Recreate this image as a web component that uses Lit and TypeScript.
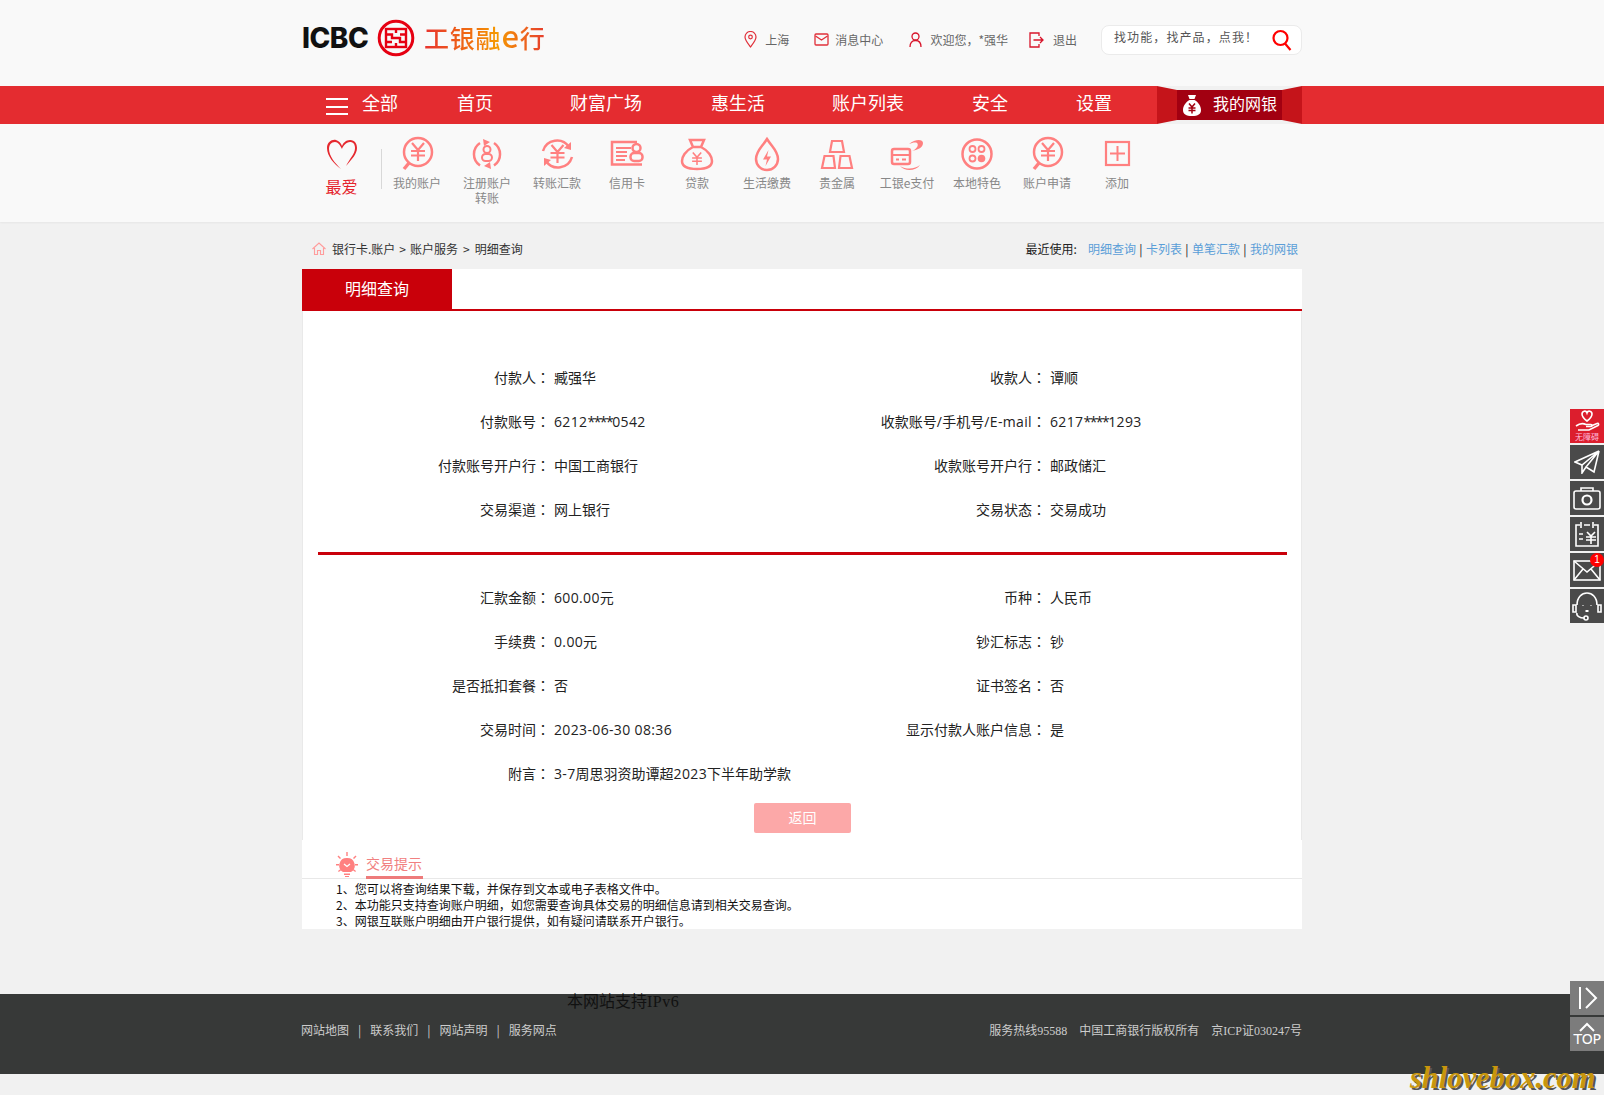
import { LitElement, html, css, svg } from "lit";
import { customElement } from "lit/decorators.js";

const yen = (x: number, y: number, s = 1) => svg`<path transform="translate(${x} ${y}) scale(${s})" d="M-6 -8L0 -1L6 -8M-7 0H7M-7 4.5H7M0 -1V10" fill="none" stroke="currentColor" stroke-width="2.2"/>`;

const icons: Record<string, unknown> = {
  account: svg`<circle cx="19" cy="16" r="14"/><path d="M10 27L5 33" stroke-width="3.4"/>${yen(19, 15)}`,
  register: svg`<path d="M11 7A13.500 13.500 0 0 0 11 29.500M25 7A13.500 13.500 0 0 1 25 29.500"/><path d="M14 3L21 6L15 10Z" fill="currentColor" stroke="none"/><path d="M22 33L15 30L21 26Z" fill="currentColor" stroke="none"/><circle cx="18" cy="13.500" r="3.500" stroke-width="2"/><rect x="13" y="18" width="10" height="7" rx="3.500" stroke-width="2"/>`,
  transfer: svg`<path d="M4 15A14.500 14.500 0 0 1 30 11"/><path d="M33 21A14.500 14.500 0 0 1 7 25"/><path d="M32 6V14L25 12Z" fill="currentColor" stroke="none"/><path d="M5 30V22L12 24Z" fill="currentColor" stroke="none"/>${yen(18.5, 17)}`,
  card: svg`<path d="M28 6H3V28.500H33"/><path d="M7 12H22M7 16H18M7 20H18M7 24H16" stroke-width="2"/><circle cx="27.500" cy="12" r="4"/><rect x="21.500" y="17" width="12" height="8" rx="3.500"/>`,
  loan: svg`<path d="M11 4H25L22 11H14ZM14 11C6 15 3 21 3 25C3 31 8 33 18 33C28 33 33 31 33 25C33 21 30 15 22 11"/>${yen(18, 22, .7)}`,
  life: svg`<path d="M18 3C13 11 7 15 7 23A11 11 0 0 0 29 23C29 15 23 11 18 3Z"/><path d="M19.500 14L14 23.500H18L16.500 30L22 20.500H18Z" fill="currentColor" stroke="none"/>`,
  gold: svg`<path d="M13 5H23L25 16H11ZM5.500 20H14.500L16 32H3ZM21.500 20H30.500L33 32H20Z" stroke-width="2.200"/>`,
  epay: svg`<rect x="3" y="13" width="18" height="15" rx="2"/><path d="M3 19H21M7 23.500H10M13 23.500H17" stroke-width="2"/><path d="M20 8C26 3 34 3 34 7C34 12 28 14 23 15C28 13 30 9 28 7C26 6 23 7 20 8Z" fill="currentColor" stroke="none"/><path d="M11 30C18 34 26 33 31 29C27 35 16 36 11 30Z" fill="currentColor" stroke="none"/>`,
  local: svg`<circle cx="18" cy="18" r="14.500"/><circle cx="13.500" cy="13" r="3" stroke-width="1.800"/><circle cx="22.500" cy="13" r="3" stroke-width="1.800"/><circle cx="13.500" cy="22.500" r="3" stroke-width="1.800"/><circle cx="22.500" cy="22.500" r="3.800" fill="currentColor" stroke="none"/>`,
  add: svg`<rect x="7" y="6" width="23" height="23" stroke-width="2.200"/><path d="M18.500 10V25M11 17.500H26" stroke-width="2"/>`,
};

const shortcuts: [string, string, string?][] = [
  ["account", "我的账户"], ["register", "注册账户", "转账"], ["transfer", "转账汇款"], ["card", "信用卡"],
  ["loan", "贷款"], ["life", "生活缴费"], ["gold", "贵金属"], ["epay", "工银e支付"], ["local", "本地特色"],
  ["account", "账户申请"], ["add", "添加"],
];

const first: [string, string, string, string][] = [
  ["付款人", "臧强华", "收款人", "谭顺"],
  ["付款账号", "6212****0542", "收款账号/手机号/E-mail", "6217****1293"],
  ["付款账号开户行", "中国工商银行", "收款账号开户行", "邮政储汇"],
  ["交易渠道", "网上银行", "交易状态", "交易成功"],
];
const second: [string, string, string, string][] = [
  ["汇款金额", "600.00元", "币种", "人民币"],
  ["手续费", "0.00元", "钞汇标志", "钞"],
  ["是否抵扣套餐", "否", "证书签名", "否"],
  ["交易时间", "2023-06-30 08:36", "显示付款人账户信息", "是"],
];

const latin = (t: string) => t.split(/(\*+)/).map((p, i) => (i % 2 ? html`<span class="ast">${p}</span>` : p));
const runs = (t: string) => t.split(/([\x20-\x7e]+)/).map((p, i) => (i % 2 ? html`<span class="ln">${latin(p)}</span>` : p));

@customElement("app-root")
export class AppRoot extends LitElement {
  static styles = css`
    :host { display: block; position: relative; min-height: 1095px; overflow: hidden; background: #f1f1f1; color: #222; font: 12px "Noto Sans CJK SC", "Liberation Sans", sans-serif; }
    * { box-sizing: border-box; }
    a { color: inherit; text-decoration: none; }
    svg { display: block; flex: none; }
    .wrap { width: 1000px; margin: 0 auto; }
    .top { background: #f9f9f9; height: 86px; }
    .top .wrap { display: flex; align-items: center; height: 79px; }
    .logo { display: flex; align-items: center; margin-top: -3px; }
    .icbc { font: 800 28px/1 Inter, "Liberation Sans", sans-serif; color: #111; letter-spacing: -.5px; width: 76px; }
    .brand { margin-left: 9px; margin-top: -2px; font-size: 25px; line-height: 32px; letter-spacing: .8px; font-weight: 500; white-space: nowrap; background: linear-gradient(90deg, #e8332f 0%, #f0700f 40%, #f59a00 60%, #ee6a1a 80%, #e63a2e 100%); -webkit-background-clip: text; background-clip: text; color: transparent; }
    .brand span { font-size: 31px; line-height: 20px; font-weight: 500; }
    .links { margin-left: auto; display: flex; align-items: center; gap: 24px; color: #666; white-space: nowrap; }
    .links .i { display: flex; align-items: center; gap: 8px; }
    .links .mail { margin-left: 1px; gap: 6px; }
    .links .user { margin-left: 2px; }
    .links .exit { margin-left: -3px; gap: 9px; }
    .search { width: 201px; height: 30px; background: #fff; border: 1px solid #ebebeb; border-radius: 8px; display: flex; justify-content: space-between; padding: 2px 9px 0 12px; color: #555; letter-spacing: 1.1px; line-height: 18px; }
    .nav { background: #e42c30; height: 38px; color: #fff; }
    .nav .wrap { display: flex; align-items: center; height: 38px; font-size: 18px; line-height: 32px; white-space: nowrap; }
    .nav .wrap > * { flex: none; }
    .nav .wrap > a, .nav .wrap > span { padding-bottom: 6px; }
    .burger { margin-left: 24px; width: 22px; height: 17px; margin-right: 14px; margin-top: 3px; border-top: 2px solid #fff; border-bottom: 2px solid #fff; position: relative; }
    .burger::after { content: ""; position: absolute; left: 0; right: 0; top: 5.5px; height: 2px; background: #fff; }
    .n1 { margin-left: 59px; } .n2 { margin-left: 77px; } .n3 { margin-left: 69px; } .n4 { margin-left: 67px; } .n5 { margin-left: 68px; } .n6 { margin-left: 68px; }
    .ribbon { margin-left: 45px; width: 145px; height: 38px; position: relative; background: #f1f1f1; display: flex; justify-content: center; align-items: center; }
    .ribbon .wing { position: absolute; left: 0; top: 0; }
    .ribbon .mid { position: relative; width: 105px; height: 30px; background: #a20011; display: flex; align-items: center; padding-left: 6px; gap: 12px; font-size: 16px; line-height: 24px; }
    .ribbon .mid span { padding-bottom: 5px; }
    .shortcuts { background: #f9f9f9; height: 98px; box-shadow: 0 1px 2px rgba(0,0,0,.05); }
    .shortcuts .wrap { display: flex; }
    .fav { width: 79px; padding-top: 15px; display: flex; flex-direction: column; align-items: center; color: #e5252d; font-size: 16px; line-height: 24px; }
    .fav svg { margin-bottom: 4px; }
    .sep { width: 1px; height: 40px; background: #d8d8d8; margin-top: 25px; }
    .sc { width: 70px; padding-top: 12px; display: flex; flex-direction: column; align-items: center; color: #888; line-height: 14.500px; text-align: center; }
    .sc svg { color: #ff8080; margin-bottom: 4px; fill: none; stroke: currentColor; stroke-width: 2.500; }
    .crumb { height: 47px; padding: 5px 4px 0 10px; display: flex; align-items: center; color: #333; }
    .crumb .home { margin-right: 6px; }
    .crumb .gt { margin: 0 4px; }
    .crumb .gt + span + .gt { margin: 0 5px; }
    .recent { margin-left: auto; color: #222; }
    .recent b { font-weight: 400; margin-right: 11px; }
    .recent a { color: #5a9ed8; }
    .recent i { font-style: normal; margin: 0 .7px; }
    .tabbar { display: flex; height: 42px; background: #fff; }
    .tab { width: 150px; background: #c9000a; color: #fff; font-size: 16px; display: flex; align-items: center; justify-content: center; padding-bottom: 4px; }
    .tabline { flex: 1; border-bottom: 2px solid #c9000a; }
    .body { background: #fff; border-left: 1px solid #e9e9e9; border-right: 1px solid #e9e9e9; height: 529px; padding-top: 44px; font-size: 14px; color: #222; }
    .row { display: grid; grid-template-columns: 247px 248px 248px 1fr; height: 44px; line-height: 44px; white-space: nowrap; }
    .lab { text-align: right; }
    .val { padding-left: 4px; }
    .co { font-family: "Noto Sans CJK TC", sans-serif; }
    .ln { font-family: "Open Sans", "Liberation Sans", sans-serif; letter-spacing: .35px; }
    .ast { letter-spacing: -1.500px; }
    .hr { height: 3px; background: #c9000a; margin: 21px 14px 20px 15px; }
    .actions { display: flex; justify-content: center; padding-top: 8px; }
    .back { width: 97px; height: 30px; margin-left: 1px; background: #fca8a8; border: 0; border-radius: 2px; color: #fff; font: 14px/28px "Noto Sans CJK SC", sans-serif; padding: 0 0 2px; }
    .tips { background: #fff; height: 89px; }
    .tips-head { height: 39px; border-bottom: 1px solid #e8e8e8; display: flex; align-items: flex-end; padding-left: 33px; gap: 7px; }
    .tips-head svg { margin-bottom: 1px; }
    .tips-head span { font-size: 14px; line-height: 15px; height: 23px; color: #f18080; border-bottom: 3px solid #ee7b7b; margin-bottom: -1px; padding: 0; width: 57px; white-space: nowrap; }
    .tips ol { list-style: none; margin: 2px 0 0; padding: 0 0 0 34px; line-height: 16px; color: #111; }
    .footer { margin-top: 65px; height: 80px; background: #373938; color: #ccc; }
    .ipv6 { padding-left: 265px; font: 16px/16px "Liberation Serif", "Noto Sans CJK SC", serif; color: #111; white-space: nowrap; }
    .ipv6 span { letter-spacing: .5px; }
    .fbar { display: flex; justify-content: space-between; align-items: center; height: 21px; margin-top: 9px; }
    .fl { display: flex; gap: 9px; margin-left: -1px; }
    .fr { display: flex; gap: 12px; font-family: "Liberation Serif", "Noto Sans CJK SC", serif; }
    .rail { position: absolute; right: 0; top: 409px; display: flex; flex-direction: column; gap: 2px; width: 34px; }
    .rail.low { top: 981px; }
    .r { height: 34px; width: 34px; background: #4a4a4a; display: flex; align-items: center; justify-content: center; position: relative; color: #fff; }
    .r svg { fill: none; stroke: #fff; stroke-width: 1.600; }
    .r.red { background: #dc1e2d; flex-direction: column; justify-content: flex-start; }
    .r.red small { font-size: 8px; line-height: 9px; color: #fbd; }
    .low .r { background: #7c7c7c; }
    .badge { position: absolute; right: 0; top: 0; width: 14px; height: 14px; border-radius: 50%; background: #f00; color: #fff; font: 10px/14px "Liberation Sans", sans-serif; text-align: center; }
    .top-t { flex-direction: column; font: 400 14px/14px "DejaVu Sans", "Liberation Sans", sans-serif; letter-spacing: -.3px; }
    .mark { position: absolute; left: 1410px; top: 1060px; font: italic 700 30.500px/36px "Liberation Serif", serif; color: #c8960c; text-shadow: 2px 2px 0 #555; white-space: nowrap; }
  `;

  private rows(data: [string, string, string, string][]) {
    return data.map(([a, b, c, d]) => html`<div class="row"><span class="lab">${runs(a)}<span class="co">：</span></span><span class="val">${runs(b)}</span><span class="lab">${runs(c)}<span class="co">：</span></span><span class="val">${runs(d)}</span></div>`);
  }

  render() {
    return html`
      <header class="top"><div class="wrap">
        <div class="logo">
          <span class="icbc">ICBC</span>
          <svg width="38" height="38" viewBox="0 0 38 38" style="margin-left:-1px" fill="none" stroke="#e60012">
            <circle cx="19" cy="19" r="16.800" stroke-width="3"/>
            <rect x="9" y="10" width="20" height="18" stroke-width="2.400"/>
            <path d="M9 15.500H15V19H23V23H29M29 15.500H23M9 23H15M19 10V14M19 24V28" stroke-width="2.400"/>
          </svg>
          <span class="brand">工银融<span>e</span>行</span>
        </div>
        <div class="links">
          <div class="i"><svg width="13" height="17" viewBox="0 0 13 17" fill="none" stroke="#e0303a" stroke-width="1.200"><path d="M6.500 16C3.500 12 1 9 1 6A5.500 5.500 0 0 1 12 6C12 9 9.500 12 6.500 16Z"/><circle cx="6.500" cy="6" r="1.800"/></svg><span>上海</span></div>
          <div class="i mail"><svg width="15" height="13" viewBox="0 0 15 13" fill="none" stroke="#e0303a" stroke-width="1.300"><rect x="1" y="1" width="13" height="11" rx="1"/><path d="M1.500 3L7.500 7L13.500 3"/></svg><span>消息中心</span></div>
          <div class="i user"><svg width="13" height="15" viewBox="0 0 13 15" fill="none" stroke="#d8142a" stroke-width="1.300"><circle cx="6.500" cy="4.500" r="3.500"/><path d="M1 15C1 11 3 8.500 6.500 8.500C10 8.500 12 11 12 15"/></svg><span>欢迎您，*强华</span></div>
          <div class="i exit"><svg width="15" height="16" viewBox="0 0 15 16" fill="none" stroke="#d8142a" stroke-width="1.300"><path d="M10 4V1H1V15H10V12M4.500 8H14M11 5L14 8L11 11"/></svg><span>退出</span></div>
          <div class="search"><span>找功能，找产品，点我！</span><svg width="20" height="22" viewBox="0 0 20 22" fill="none" stroke="#f00" stroke-width="2.200" style="margin-top:1px"><circle cx="8.500" cy="9" r="7"/><path d="M13 14.500L18.500 21"/></svg></div>
        </div>
      </div></header>
      <nav class="nav"><div class="wrap">
        <div class="burger"></div><span>全部</span>
        <a class="n1">首页</a><a class="n2">财富广场</a><a class="n3">惠生活</a><a class="n4">账户列表</a><a class="n5">安全</a><a class="n6">设置</a>
        <div class="ribbon">
          <svg class="wing" width="145" height="38" viewBox="0 0 145 38" fill="#c5141a"><path d="M0 0L20 4V34L0 38ZM145 0L125 4V34L145 38Z"/></svg>
          <div class="mid"><svg width="18" height="21" viewBox="0 0 18 21" fill="#fff"><path d="M5 0H13L11.500 4H6.500ZM6.500 5H11.500C15 7 18 11 18 15C18 19 15 21 9 21C3 21 0 19 0 15C0 11 3 7 6.500 5Z"/><path d="M6 8.500L9 12L12 8.500M5.500 13H12.500M5.500 15.500H12.500M9 12V18.500" fill="none" stroke="#a20011" stroke-width="1.500"/></svg><span>我的网银</span></div>
        </div>
      </div></nav>
      <section class="shortcuts"><div class="wrap">
        <div class="fav">
          <svg width="32" height="31" viewBox="0 0 32 31" fill="#e5282e"><path d="M15 30C8 25 1 17 1 9C1 3 6 0 10 1C13 2 15 4 16 7C17 4 20 1 24 1C29 1 31 5 31 9C31 15 26 20 20 27C24 19 29 15 29 9C29 5 27 3 24 3C20 3 17 7 16 10C14 6 12 3 9 3C5 3 3 6 3 10C3 17 9 24 15 30Z"/></svg>
          <span>最爱</span>
        </div>
        <div class="sep"></div>
        ${shortcuts.map(([k, a, b]) => html`<a class="sc"><svg width="36" height="36" viewBox="0 0 36 36">${icons[k]}</svg><span>${a}</span>${b ? html`<span>${b}</span>` : ""}</a>`)}
      </div></section>
      <main class="wrap">
        <div class="crumb">
          <svg class="home" width="14" height="13" viewBox="0 0 14 13" fill="none" stroke="#ff9c9c" stroke-width="1.100"><path d="M0.500 7L7 1L13.500 7M2.500 6V12.500H5.500V8.500H8.500V12.500H11.500V6"/></svg>
          <span>银行卡.账户</span><span class="gt">&gt;</span><span>账户服务</span><span class="gt">&gt;</span><span>明细查询</span>
          <div class="recent"><b>最近使用:</b><a>明细查询</a><i> | </i><a>卡列表</a><i> | </i><a>单笔汇款</a><i> | </i><a>我的网银</a></div>
        </div>
        <div class="tabbar"><div class="tab">明细查询</div><div class="tabline"></div></div>
        <div class="body">
          ${this.rows(first)}
          <div class="hr"></div>
          ${this.rows(second)}
          <div class="row"><span class="lab">附言<span class="co">：</span></span><span class="val">${runs("3-7周思羽资助谭超2023下半年助学款")}</span></div>
          <div class="actions"><button class="back">返回</button></div>
        </div>
        <div class="tips">
          <div class="tips-head">
            <svg width="24" height="26" viewBox="0 0 24 26" fill="#ff8080"><path d="M12 7A7.500 7.500 0 0 1 16 21H8A7.500 7.500 0 0 1 12 7Z"/><path d="M9 22.500H15V24H9ZM10 25H14V26H10ZM11.300 1H12.700V5H11.300ZM1 13H4V14.400H1ZM20 13H23V14.400H20ZM3.500 4.500L6 7L5 8L2.500 5.500ZM20.500 4.500L18 7L19 8L21.500 5.500ZM3 20L5.500 18L6.300 19L3.800 21ZM21 20L18.500 18L17.700 19L20.200 21Z"/><path d="M9 13L12 15.500L15 13" fill="none" stroke="#fff" stroke-width="1.300"/></svg>
            <span>交易提示</span>
          </div>
          <ol>
            <li>1、您可以将查询结果下载，并保存到文本或电子表格文件中。</li>
            <li>2、本功能只支持查询账户明细，如您需要查询具体交易的明细信息请到相关交易查询。</li>
            <li>3、网银互联账户明细由开户银行提供，如有疑问请联系开户银行。</li>
          </ol>
        </div>
      </main>
      <footer class="footer">
        <div class="wrap">
          <div class="ipv6">本网站支持<span>IPv6</span></div>
          <div class="fbar">
            <div class="fl"><a>网站地图</a><span>|</span><a>联系我们</a><span>|</span><a>网站声明</a><span>|</span><a>服务网点</a></div>
            <div class="fr"><span>服务热线95588</span><span>中国工商银行版权所有</span><span>京ICP证030247号</span></div>
          </div>
        </div>
      </footer>
      <aside class="rail">
        <div class="r red"><svg width="26" height="23" viewBox="0 0 26 23"><path d="M13 12C9 9 8 7 8 5C8 2 12 1 13 4C14 1 18 2 18 5C18 7 17 9 13 12ZM2 17C6 14 9 14 12 15.500H17C18.500 15.500 18.500 17.500 17 17.500H12M17 17L23 14.500C25 14 25 16 24 16.500L15 21H4"/></svg><small>无障碍</small></div>
        <div class="r"><svg width="26" height="24" viewBox="0 0 26 24"><path d="M25 1L1 12L8 15L25 1ZM25 1L20 22L12 17L25 1ZM8 15V23L12 17"/></svg></div>
        <div class="r"><svg width="28" height="24" viewBox="0 0 28 24"><rect x="1" y="5" width="26" height="18" rx="2"/><path d="M8 5V2H20V5"/><circle cx="14" cy="14" r="4.500" stroke-width="2.200"/></svg></div>
        <div class="r"><svg width="26" height="26" viewBox="0 0 26 26"><path d="M6 4H2V25H24V4H20M10 4H16M7 1V7M19 1V7M5 13H9M5 18H9" /><path d="M13 11L17 15L21 11M12 16H22M12 19H22M17 15V23" /></svg></div>
        <div class="r"><svg width="28" height="21" viewBox="0 0 28 21"><rect x="1" y="1" width="26" height="19"/><path d="M1 1L14 12L27 1M1 20L10 9M27 20L18 9"/></svg><span class="badge">1</span></div>
        <div class="r"><svg width="30" height="30" viewBox="0 0 30 30"><path d="M5 14C5 6 10 2 15 2C20 2 25 6 25 14M5 22C4 25 8 27 12 27M1 14H4V21H1ZM26 14H29V21H26Z"/><circle cx="14" cy="27" r="2"/><path d="M11 14.500V15M19 14.500V15M13.500 20H16.500" stroke-width="2"/></svg></div>
      </aside>
      <aside class="rail low">
        <div class="r"><svg width="26" height="26" viewBox="0 0 26 26"><path d="M6 2V24M12 3L22 13L12 23" stroke-width="2"/></svg></div>
        <div class="r top-t"><svg width="20" height="10" viewBox="0 0 20 10"><path d="M3 9L10 2L17 9" stroke-width="2"/></svg><span>TOP</span></div>
      </aside>
      <div class="mark">shlovebox.com</div>
    `;
  }
}
